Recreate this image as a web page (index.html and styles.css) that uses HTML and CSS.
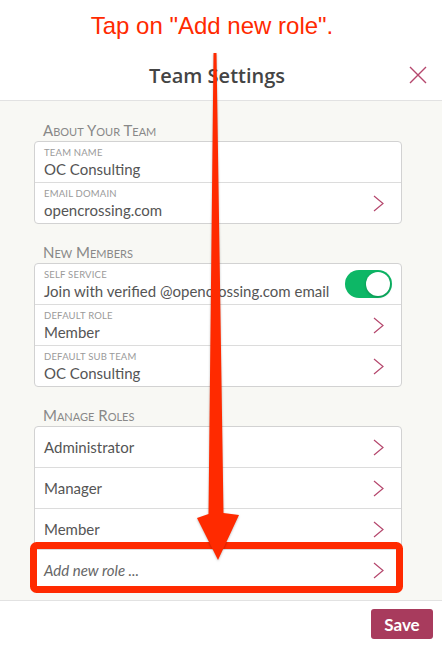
FILE: index.html
```html
<!DOCTYPE html>
<html lang="en">
<head>
  <meta charset="UTF-8" />
  <meta name="viewport" content="width=device-width, initial-scale=1.0"/>
  <title>Team Settings</title>
  <link rel="stylesheet" href="styles.css">
</head>
<body>
  <div class="screen">
    <div class="callout">Tap on "Add new role".</div>

    <header class="topbar">
      <h1 class="title">Team Settings</h1>
      <button class="close-btn" aria-label="Close">
        <svg width="18" height="18" viewBox="0 0 18 18">
          <path d="M1 1 L17 17 M17 1 L1 17" stroke="#b5476d" stroke-width="1.4" fill="none"/>
        </svg>
      </button>
    </header>

    <main class="content">
      <section class="group">
        <h2 class="group-title">About Your Team</h2>
        <div class="card">
          <div class="row">
            <div class="field">
              <span class="field-label">Team Name</span>
              <span class="field-value">OC Consulting</span>
            </div>
          </div>
          <div class="row">
            <div class="field">
              <span class="field-label">Email Domain</span>
              <span class="field-value">opencrossing.com</span>
            </div>
            <svg class="chevron" width="11" height="17" viewBox="0 0 11 17"><path d="M1 1 L10 8.5 L1 16" /></svg>
          </div>
        </div>
      </section>

      <section class="group">
        <h2 class="group-title">New Members</h2>
        <div class="card">
          <div class="row">
            <div class="field">
              <span class="field-label">Self Service</span>
              <span class="field-value">Join with verified @opencrossing.com email</span>
            </div>
            <span class="toggle on"><span class="knob"></span></span>
          </div>
          <div class="row">
            <div class="field">
              <span class="field-label">Default Role</span>
              <span class="field-value">Member</span>
            </div>
            <svg class="chevron" width="11" height="17" viewBox="0 0 11 17"><path d="M1 1 L10 8.5 L1 16" /></svg>
          </div>
          <div class="row">
            <div class="field">
              <span class="field-label">Default Sub Team</span>
              <span class="field-value">OC Consulting</span>
            </div>
            <svg class="chevron" width="11" height="17" viewBox="0 0 11 17"><path d="M1 1 L10 8.5 L1 16" /></svg>
          </div>
        </div>
      </section>

      <section class="group">
        <h2 class="group-title">Manage Roles</h2>
        <div class="card">
          <div class="row">
            <span class="row-text">Administrator</span>
            <svg class="chevron" width="11" height="17" viewBox="0 0 11 17"><path d="M1 1 L10 8.5 L1 16" /></svg>
          </div>
          <div class="row">
            <span class="row-text">Manager</span>
            <svg class="chevron" width="11" height="17" viewBox="0 0 11 17"><path d="M1 1 L10 8.5 L1 16" /></svg>
          </div>
          <div class="row">
            <span class="row-text">Member</span>
            <svg class="chevron" width="11" height="17" viewBox="0 0 11 17"><path d="M1 1 L10 8.5 L1 16" /></svg>
          </div>
          <div class="row">
            <span class="row-text new-role">Add new role ...</span>
            <svg class="chevron" width="11" height="17" viewBox="0 0 11 17"><path d="M1 1 L10 8.5 L1 16" /></svg>
          </div>
        </div>
      </section>
    </main>

    <footer class="footer">
      <button class="save-btn">Save</button>
    </footer>

    <!-- annotation drawn over the screenshot -->
    <svg class="overlay" width="442" height="645" viewBox="0 0 442 645">
      <rect x="33.5" y="545.5" width="366" height="44" rx="3" fill="none" stroke="#ff2a00" stroke-width="7"/>
      <polygon class="arrow" points="213.5,53 216.5,53 223.5,513 239,515 218,560 197,518 208.5,514" fill="#ff2a00"/>
    </svg>
  </div>
</body>
</html>
```

FILE: styles.css
```css
* {
  margin: 0;
  padding: 0;
  box-sizing: border-box;
}

body {
  font-family: Lato, 'Open Sans', sans-serif;
  background-color: #fff;
  color: #555;
}

.screen {
  position: relative;
  width: 442px;
  height: 645px;
  display: flex;
  flex-direction: column;
  overflow: hidden;
}

.callout {
  height: 52px;
  display: flex;
  align-items: center;
  justify-content: center;
  padding-right: 18px;
  font-family: 'Liberation Sans', Arial, sans-serif;
  font-size: 24px;
  color: #ff2a00;
}

.topbar {
  height: 49px;
  display: grid;
  grid-template-columns: 1fr auto 1fr;
  align-items: center;
  border-bottom: 1px solid #e2e2e2;
  padding: 0 8px 2px 0;
}

.title {
  grid-column: 2;
  font-family: 'Open Sans', sans-serif;
  font-size: 20px;
  font-weight: 600;
  color: #444;
}

.close-btn {
  grid-column: 3;
  justify-self: end;
  margin-right: 7px;
  background: none;
  border: none;
  display: flex;
}

.content {
  flex: 1;
  background-color: #f8f8f4;
  padding: 21px 40px 0 34px;
}

.group + .group {
  margin-top: 20px;
}

.group-title {
  height: 16px;
  line-height: 16px;
  margin-bottom: 3px;
  padding-left: 9px;
  font-size: 15px;
  font-weight: 400;
  font-variant: small-caps;
  color: #888;
}

.card {
  background-color: #fff;
  border: 1px solid #d2d2d2;
  border-radius: 4px;
}

.row {
  height: 41px;
  display: flex;
  align-items: center;
  justify-content: space-between;
  padding: 0 17px 0 9px;
  border-bottom: 1px solid #dcdcdc;
}

.row:last-child {
  height: 40px;
  border-bottom: none;
}

.field {
  display: flex;
  flex-direction: column;
  gap: 1px;
  padding-top: 1px;
}

.field-label {
  font-size: 9.5px;
  line-height: 11px;
  text-transform: uppercase;
  color: #9a9a9a;
  letter-spacing: 0.2px;
}

.field-value {
  font-size: 15px;
  line-height: 20px;
  color: #555;
}

.row-text {
  font-size: 15px;
  color: #555;
}

.new-role {
  font-style: italic;
  color: #666;
}

.chevron path {
  fill: none;
  stroke: #b5476d;
  stroke-width: 1.2;
}

.toggle {
  width: 47px;
  height: 28px;
  border-radius: 14px;
  background-color: #0db766;
  position: relative;
  margin-right: -8px;
}

.knob {
  position: absolute;
  top: 2px;
  right: 2px;
  width: 24px;
  height: 24px;
  border-radius: 50%;
  background-color: #fff;
  box-shadow: 0 1px 3px rgba(0, 0, 0, 0.25);
}

.footer {
  height: 45px;
  border-top: 1px solid #e2e2e2;
  display: flex;
  align-items: center;
  justify-content: flex-end;
  padding: 2px 9px 0 0;
}

.save-btn {
  width: 62px;
  height: 30px;
  background-color: #a83b5d;
  color: #fff;
  border: none;
  border-radius: 3px;
  font-family: Lato, sans-serif;
  font-size: 17px;
  font-weight: 700;
}

.overlay {
  position: absolute;
  top: 0;
  left: 0;
  pointer-events: none;
}

.arrow {
  filter: drop-shadow(0 1px 1px rgba(0, 0, 0, 0.25));
}
```
